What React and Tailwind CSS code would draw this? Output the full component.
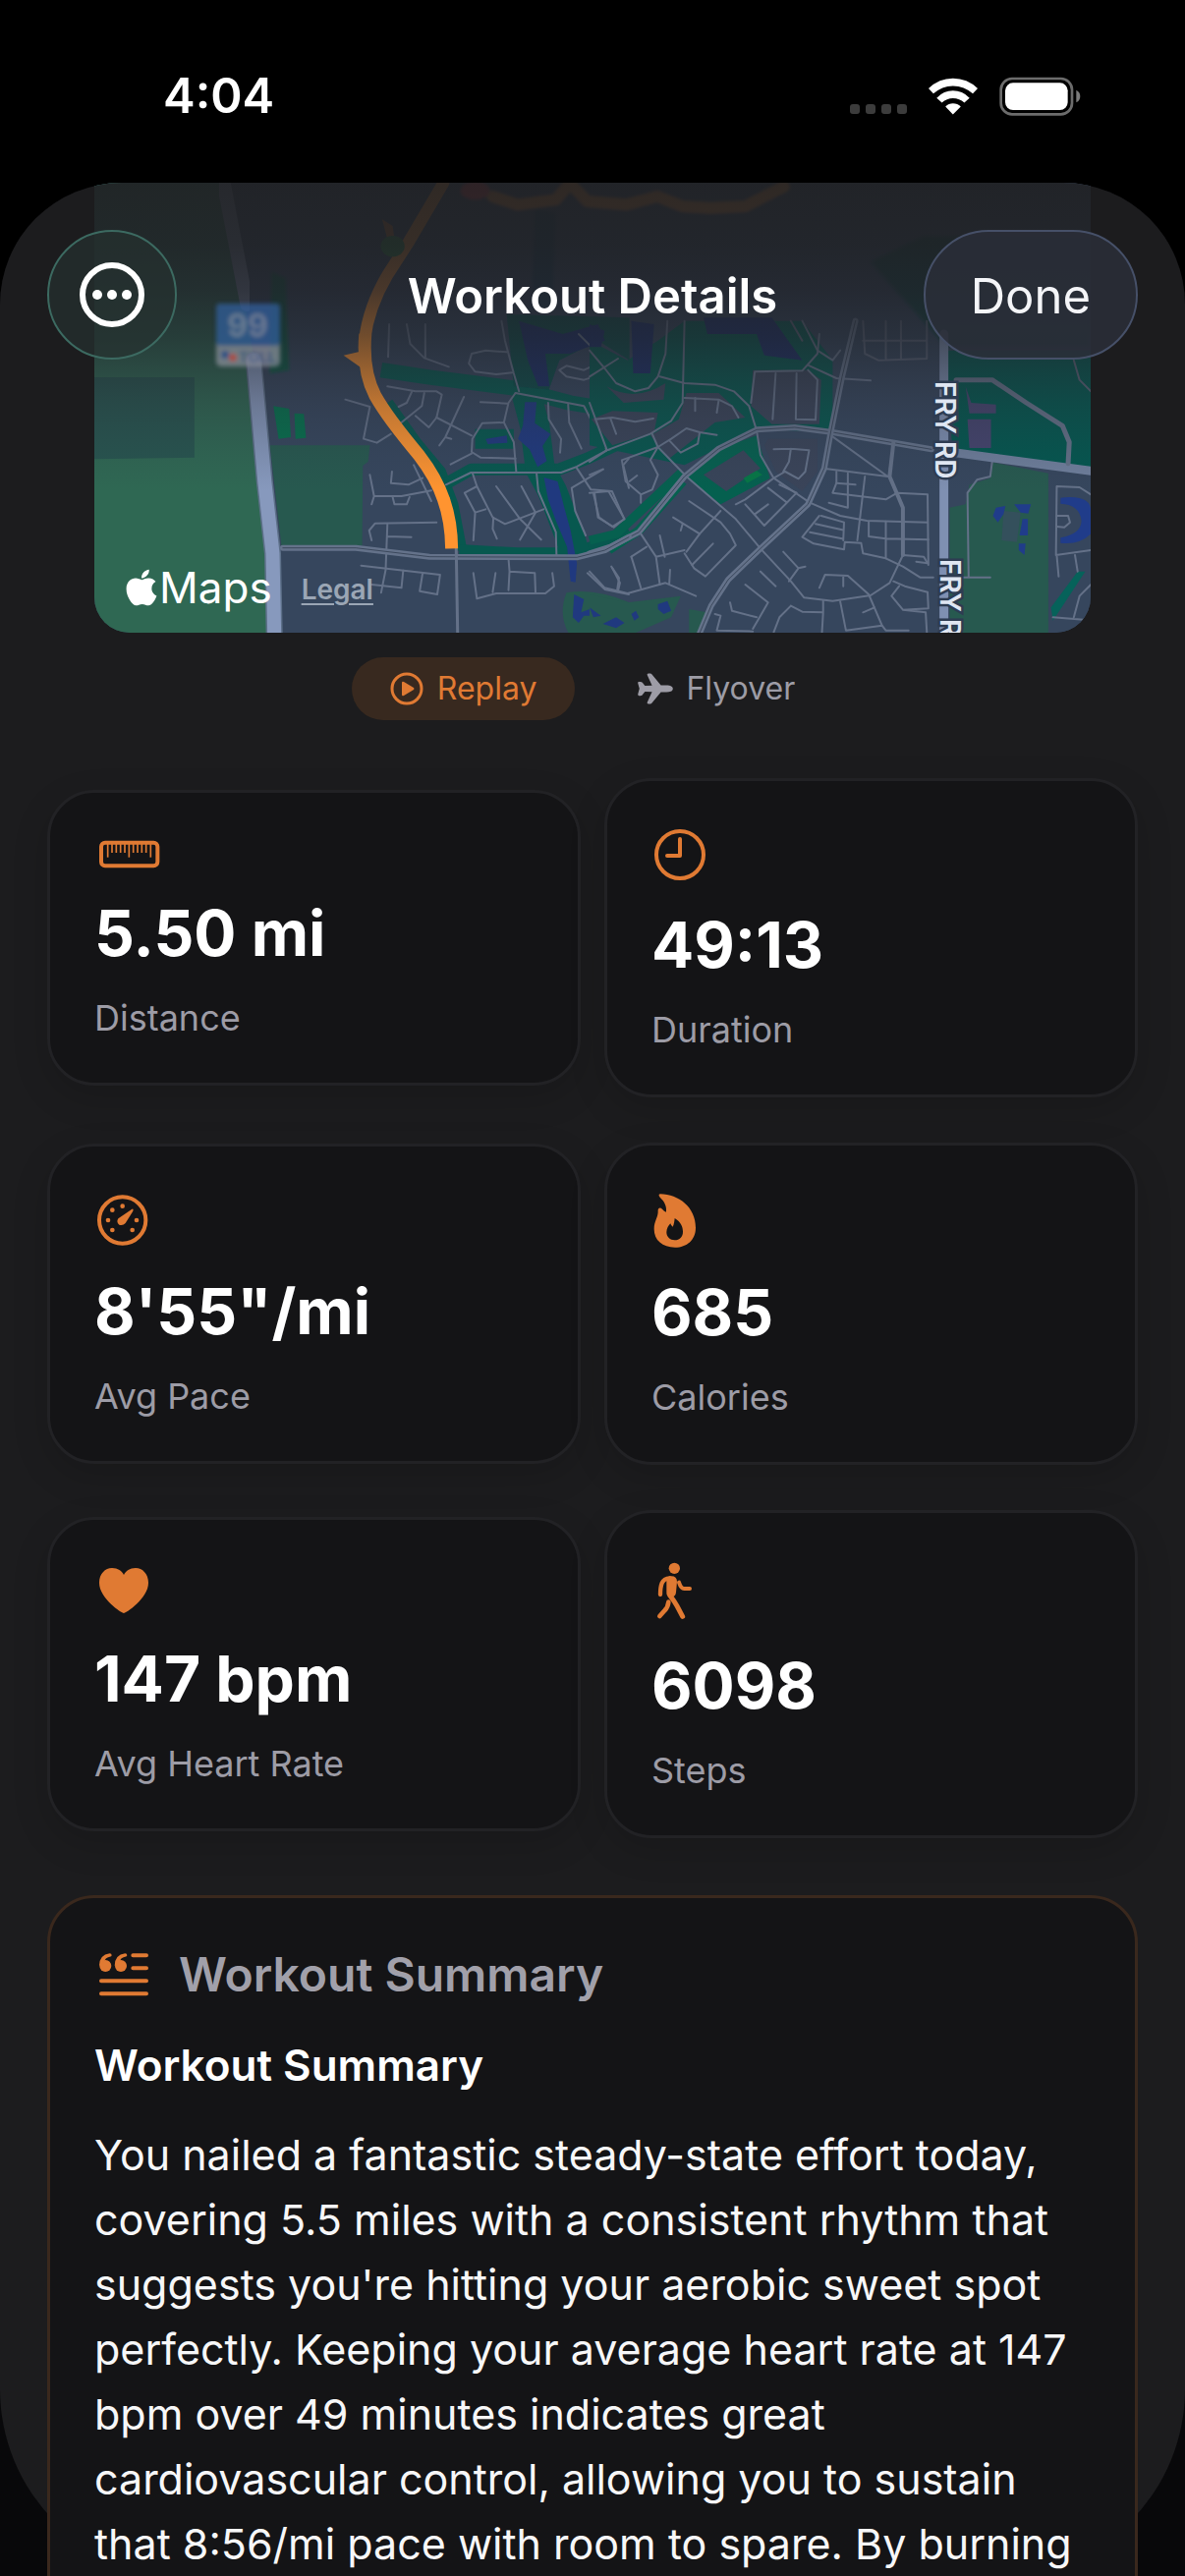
import React from "react";
import { IoAirplane } from "react-icons/io5";
import { FaApple } from "react-icons/fa";

const ORANGE = "#e07a33";

/* ---------- status bar ---------- */

function StatusBar() {
  return (
    <div className="flex h-[186px] shrink-0 items-center justify-between pt-[10px] pr-[106px] pb-[1px] pl-[166px]">
      <time className="text-[49px] leading-[60px] font-semibold text-white">4:04</time>
      <div className="flex items-center gap-[22px]">
        <svg width="58" height="38" viewBox="0 0 58 38" fill="#3c3c3c" role="img" aria-label="No signal">
          <rect x="0" y="27" width="10" height="10" rx="3" />
          <rect x="16" y="27" width="10" height="10" rx="3" />
          <rect x="32" y="27" width="10" height="10" rx="3" />
          <rect x="48" y="27" width="10" height="10" rx="3" />
        </svg>
        <svg width="50" height="38" viewBox="286 55 151 114" fill="#fff" role="img" aria-label="Wi-Fi">
          <path d="M286 88 Q318 57 361 57 Q405 57 437 88 L422 104 Q396 80 361 80 Q327 80 301 104Z" />
          <path d="M311 117 Q333 95 361 95 Q390 95 412 117 L396 132 Q381 118 361 118 Q342 118 327 132Z" />
          <path d="M338 144 Q348 134 361 134 Q375 134 385 144 L361 168Z" />
        </svg>
        <svg width="83" height="40" viewBox="503 52 249 120" role="img" aria-label="Battery full">
          <rect x="508" y="58" width="217" height="109" rx="34" fill="none" stroke="#6c6c6c" strokeWidth="8" />
          <rect x="521" y="71" width="191" height="83" rx="24" fill="#fff" />
          <path d="M738 93 Q750 99 750 112 Q750 125 738 131Z" fill="#7c7c7c" />
        </svg>
      </div>
    </div>
  );
}

/* ---------- map ---------- */

const WEST = "translate(80 180) scale(0.35714 0.33333)";
const EAST = "translate(600 180) scale(0.38655 0.33333)";

const westRoads = [
  "M880 640 L960 655 L1020 655 L1035 665 L1020 735",
  "M950 655 L935 690 L912 702",
  "M1020 735 L998 765 L960 730",
  "M985 660 L978 700 L920 750",
  "M1020 735 L1120 790",
  "M1098 672 L1045 795 L1028 820 M1045 795 L1062 800",
  "M1145 688 L1222 692",
  "M1245 660 L1225 690 L1212 750 L1150 752 L1122 800 L1120 840 L1145 857 L1245 860",
  "M1120 845 L1060 878",
  "M1212 750 L1240 810 L1247 900",
  "M1245 660 L1440 700 L1505 835",
  "M1338 690 L1340 740 L1375 800 L1372 842",
  "M1395 695 L1398 750 L1433 830",
  "M1470 740 L1500 735 L1568 740 M1512 740 L1530 785",
  "M1255 655 L1240 600 L1215 500 L1205 440",
  "M885 450 L882 550 M935 450 L945 510 L985 553 L1055 580 M988 450 L988 553",
  "M1235 598 L1190 603 L1130 595 L1112 570 L1120 540 L1160 530 L1220 535",
  "M1425 480 L1490 550 L1525 630 L1568 650",
  "M1535 555 L1500 600 L1440 620 L1390 610 L1370 590 L1390 577 L1440 590 L1500 560 L1530 555",
  "M760 680 L830 702 L812 800 L850 812 L890 785",
  "M1047 940 L1118 903 L1375 903 L1420 885 L1505 835 L1568 815",
  "M1122 903 L1135 945 L1100 965 L1130 1025 L1125 1110 M1130 1025 L1160 1015",
  "M1135 945 L1180 1040 L1215 1060 L1325 1015",
  "M1190 945 L1258 1045 L1318 1108",
  "M1262 945 L1302 1025 L1258 1108",
  "M1182 1040 L1180 1075 L1192 1105",
  "M1305 905 L1310 960 L1360 1085 L1362 1160",
  "M1420 890 L1460 955 L1520 960 L1555 1045 L1525 1070 L1480 1040 L1470 965",
  "M1495 893 L1405 950 L1415 1020 L1445 1095",
  "M1568 860 L1552 880 L1568 950",
  "M830 910 L842 975 L835 1000 M842 975 L920 975 L1005 958",
  "M893 900 L890 935 L940 940 L980 920 M895 978 L900 1000 L935 1000 L943 978",
  "M955 880 L1005 990",
  "M835 1110 L828 1080 L845 1058 L1020 1055",
  "M880 1060 L875 1200 L862 1270 M880 1098 L948 1100",
  "M805 1187 L1030 1215 L1022 1275 L972 1265 L980 1212",
  "M835 1245 L920 1255 L925 1202",
  "M1225 1165 L1228 1205 L1300 1210 L1302 1268 M1228 1205 L1225 1262",
  "M1125 1210 L1135 1288 L1190 1272 L1330 1272 L1355 1250 L1350 1210 M1188 1210 L1180 1268",
  "M1450 1210 L1500 1260 L1568 1275 M1518 1190 L1540 1225 L1535 1260",
];

const eastRoads = [
  "M0 690 L45 832 M15 740 L60 735 L120 748 L168 738 M55 738 L70 785",
  "M0 870 L45 835 L160 785 L215 745 L245 690 L250 440",
  "M205 440 L200 540 L180 610 L155 645 L120 655 L70 630 L40 585 L0 530",
  "M0 610 L75 555",
  "M185 610 L250 630 L330 635 L380 655 L420 700 L440 775",
  "M250 675 L340 680 L375 700 L392 735 M278 675 L278 715 M340 682 L335 720",
  "M425 690 L435 595 L560 592 L600 540 L605 480",
  "M490 600 L482 740 M545 600 L543 740 L595 742 L600 620 L575 590",
  "M560 440 L600 530 L640 560 L660 530",
  "M575 575 L650 615 L740 622",
  "M165 785 L180 825 L255 915 L385 1045 L450 1135 L530 1235 L565 1285 L640 1295 L740 1278 L790 1240 L825 1155",
  "M180 825 L85 865 L95 930 L135 970 L165 955 L180 910 L160 865 L180 825 M135 970 L135 995 M105 930 L125 912",
  "M180 825 L215 800 L255 768 L290 780 L285 815 L240 842 L210 805 M290 780 L335 788",
  "M440 775 L450 850 L485 920 L580 995 L660 1035 L730 1050 L890 1055",
  "M485 832 L530 830 L578 835 L568 900 L550 922 L515 900 L485 920 M530 830 L525 870 L510 900",
  "M485 920 L410 985 L385 1000 M470 950 L520 995 M545 965 L460 1065 L410 1000 M500 940 L545 965 M435 1030 L470 1000",
  "M630 785 L785 915 L615 890 M800 815 L788 915 L825 1010 L825 1155",
  "M650 900 L650 935 L640 965 L780 985 L810 965 L890 970 L892 1185",
  "M680 905 L680 1010 M650 935 L700 940 M725 915 L705 1110 M630 995 L680 1010",
  "M605 1035 L560 1100 L590 1120 L670 1138 L672 1115 L715 1118 L720 1150 L780 1165 L825 1190 L870 1223 L905 1223",
  "M610 1035 L670 1055 L668 1110 M595 1060 L665 1078 M580 1085 L665 1105",
  "M735 1052 L735 1098 L780 1105 L892 1108 M780 1052 L780 1165",
  "M825 1155 L880 1160 L890 1180 L860 1175",
  "M345 1020 L290 1090 L255 1145 M262 990 L345 1055 L370 1090 L385 1125 L305 1220 L275 1195 L250 1150",
  "M220 1040 L290 1090 M245 1060 L240 1080 M325 1120 L270 1185",
  "M135 1090 L175 1160 L250 1140 M185 1095 L198 1160 M110 1160 L150 1130 M175 1160 L185 1245",
  "M110 1160 L135 1255 M0 1205 L40 1255 L100 1272 L200 1240 L280 1280 M60 1195 L80 1240 L75 1265 M212 1200 L210 1240",
  "M0 965 L50 960 L92 1045 L60 1068 L25 1040 L10 965",
  "M0 910 L35 893",
  "M510 1145 L550 1195 L525 1235 M550 1195 L568 1190",
  "M450 1205 L490 1250 M410 1245 L470 1300 L450 1340 L430 1380 M370 1300 L375 1325 L440 1345",
  "M605 1255 L620 1215 L680 1218 L735 1275 L770 1370 M668 1218 L668 1250",
  "M530 1310 L500 1345 L485 1390 M530 1310 L560 1328 L615 1330 L612 1390 M615 1295 L615 1330",
  "M660 1297 L675 1385 L770 1370 L780 1385 L840 1385 M720 1330 L750 1315",
  "M800 1235 L830 1250 L890 1268 L892 1318 L825 1322 L795 1280 L815 1250 M825 1322 L885 1330 L888 1390",
  "M330 1335 L345 1340 L335 1385 L430 1388",
  "M1060 870 L1055 915 L1020 925 L995 965 L998 1220 M960 1223 L1055 1223",
  "M1320 970 L1290 948 L1230 945 L1228 1155 L1320 1140 M1230 1155 L1235 1220 M1278 1155 L1285 1205",
  "M1230 1035 L1260 1035 L1265 1055 L1250 1070 L1230 1068",
  "M1320 1245 L1290 1280 L1275 1345 M1220 1345 L1300 1352",
];

const blurredRoads = [
  "M720 440 L725 540 L760 560 L888 555 L888 440 M720 500 L888 500 M780 440 L780 555 M820 440 L820 555",
  "M530 440 L560 500 M1275 560 L1290 620 L1320 655",
];

function Road({ d, width = 2, color = "#647188" }) {
  return (
    <path d={d} fill="none" stroke={color} strokeWidth={width} strokeLinejoin="round" strokeLinecap="round" vectorEffect="non-scaling-stroke" />
  );
}

function DoubleRoad({ d }) {
  return (
    <>
      <Road d={d} width={6} color="#64728a" />
      <Road d={d} width={1} color="#3b485c" />
    </>
  );
}

function RouteMap() {
  return (
    <svg className="block w-full" viewBox="96 186 1014 458" preserveAspectRatio="xMidYMax slice" role="img" aria-label="Map of the workout route">
      <defs>
        <filter id="soft" x="-10%" y="-10%" width="120%" height="120%">
          <feGaussianBlur stdDeviation="2" />
        </filter>
        <filter id="softer" x="-10%" y="-30%" width="120%" height="160%">
          <feGaussianBlur stdDeviation="5" />
        </filter>
        <linearGradient id="fade" x1="0" y1="186" x2="0" y2="500" gradientUnits="userSpaceOnUse">
          <stop offset="0" stopColor="#202124" stopOpacity="0.93" />
          <stop offset="0.2" stopColor="#202226" stopOpacity="0.9" />
          <stop offset="0.35" stopColor="#212329" stopOpacity="0.82" />
          <stop offset="0.5" stopColor="#22252b" stopOpacity="0.64" />
          <stop offset="0.72" stopColor="#2a2d36" stopOpacity="0.3" />
          <stop offset="1" stopColor="#2f3a4a" stopOpacity="0" />
        </linearGradient>
      </defs>
      <rect x="96" y="186" width="1014" height="458" fill="#36465d" />

      {/* parks and greenways, west */}
      <g transform={WEST}>
        <path d="M40 0 H400 L475 390 L505 590 L520 900 L545 1400 H40Z" fill="#2f6853" />
        <path d="M40 612 H330 V857 L40 862Z" fill="#27554f" />
        <path d="M545 820 H830 L825 870 L810 882 L808 1125 H578Z" fill="#27594f" />
        <path d="M555 700 L600 708 L605 795 L570 800Z M615 722 L642 724 L648 797 L618 800Z" fill="#06704d" />
        <path d="M550 290 L590 310 L600 590 L545 600Z" fill="#0d5a45" filter="url(#softer)" />
        <g stroke="#07584f" fill="none" strokeLinejoin="round">
          <path d="M862 590 L1000 612 L1240 645 L1400 690 L1570 720" strokeWidth="46" />
          <path d="M880 690 L960 810 L1030 900 L1065 1000 L1090 1140" strokeWidth="34" />
          <path d="M1050 935 L1120 893 H1370 L1450 860 L1570 800" strokeWidth="36" />
          <path d="M1085 1138 L1250 1148 H1420 L1568 1080" strokeWidth="32" />
          <path d="M1275 660 L1300 760 L1315 890 L1350 960 L1400 1100 L1415 1150" strokeWidth="84" />
          <path d="M1130 800 L1240 800" strokeWidth="60" />
        </g>
        <path d="M1220 420 L1570 430 L1570 560 L1480 500 L1370 560 L1340 650 L1240 640Z" fill="#0a4c4a" filter="url(#soft)" />
        <path d="M1255 440 L1380 480 L1480 450 L1500 500 L1400 540 L1330 540 L1342 640 L1310 640 L1280 560Z" fill="#1c2f66" filter="url(#soft)" />
        <path d="M1300 100 L1360 110 L1350 400 L1290 400Z" fill="#123a52" filter="url(#softer)" />
        <g fill="#20397f">
          <path d="M1272 688 H1305 L1300 752 L1345 785 L1322 822 L1334 868 L1308 886 L1285 832 L1252 800 L1266 760Z" />
          <path d="M1160 800 L1220 790 L1222 812 L1166 816Z" />
          <path d="M1326 918 L1365 930 L1384 1010 L1402 1080 L1420 1180 L1416 1238 L1402 1235 L1392 1130 L1360 1050 L1338 985Z" />
        </g>
        <path d="M1390 1270 Q1470 1255 1570 1300 V1400 H1400 Q1365 1340 1390 1270Z" fill="#27594f" />
        <path d="M1412 1275 L1440 1290 L1432 1330 L1470 1315 L1490 1340 L1440 1340 L1425 1362 L1408 1345Z M1490 1362 L1530 1345 L1556 1365 L1530 1378Z" fill="#20397f" />
        {westRoads.map((d) => <Road key={d} d={d} />)}
      </g>

      {/* greenways, parks and lakes, east */}
      <g transform={EAST}>
        <path d="M250 440 L560 440 L640 560 L640 780 L440 770 L250 880 L0 820 V500 L100 560 L180 500Z" fill="#07574f" />
        <path d="M110 440 L170 450 L160 600 L115 600Z M300 430 L480 430 L560 560 L460 545 L440 480 L310 480Z M0 450 L40 470 L30 520 L0 520Z" fill="#1c2f66" filter="url(#soft)" />
        <path d="M740 260 L880 180 L1320 190 V520 H940Z" fill="#0c4240" filter="url(#softer)" />
        <path d="M940 530 H1320 V890 L1060 855 L955 835Z" fill="#03574f" />
        <path d="M45 640 Q120 690 200 630 L195 680 L90 690Z M5 740 L60 715 L180 720 L170 780 L60 820Z M430 590 H575 L610 620 L605 755 H480 L425 700Z M255 660 L340 660 L410 735 L330 750 L210 860 L160 790 L235 740Z M470 800 H600 V900 L560 960 L490 900 L460 820Z" fill="#3a4459" />
        <path d="M250 915 L340 830 L440 790 L475 920 L345 1000Z" fill="#05604f" />
        <path d="M300 910 L405 835 L450 890 L360 960Z" fill="#384459" />
        <path d="M405 920 L440 897 L455 910 L415 935Z" fill="#067646" />
        <path d="M0 1110 L70 1090 L245 900 M50 1140 L130 1080 L245 930" stroke="#06604f" strokeWidth="26" fill="none" />
        <path d="M0 1275 L100 1300 L240 1280 L215 1345 L120 1393 H0Z M262 1320 L310 1330 L290 1400 H262Z" fill="#27594f" />
        <path d="M0 1315 L30 1340 L10 1345Z M35 1365 L70 1345 L92 1362 L70 1378Z M110 1335 L122 1325 L130 1345 L118 1355Z M180 1305 L205 1295 L215 1325 L195 1335 L180 1320Z" fill="#20397f" />
        <path d="M990 640 L1005 690 L1070 695 V722 H1000Z M995 740 H1057 V828 H1000Z" fill="#45446e" />
        <path d="M1062 872 L1208 905 V1393 H948 V1010 L990 1000 L1000 940 L1055 920Z" fill="#27594f" />
        <path d="M1208 905 L1320 915 V1393 H1210Z" fill="#36465d" />
        <path d="M1285 1205 L1305 1205 L1220 1355 L1215 1315Z" fill="#06625a" />
        <path d="M1090 1020 L1135 1025 L1125 1115 L1085 1110Z" fill="#34505c" />
        <path d="M1070 1010 L1095 1005 L1090 1030 L1075 1055 L1062 1035Z M1118 1000 L1162 1000 L1155 1028 L1135 1025Z M1140 1045 L1154 1045 L1154 1095 L1132 1095Z M1130 1120 L1148 1120 L1145 1155 L1130 1140Z M1240 980 Q1320 970 1320 1020 V1090 Q1290 1125 1240 1118 V1102 Q1295 1090 1295 1050 Q1290 1000 1240 998Z" fill="#203c8a" />
        {eastRoads.map((d) => <Road key={d} d={d} />)}
        <g filter="url(#soft)">
          {blurredRoads.map((d) => <Road key={d} d={d} color="#5a6478" />)}
        </g>
        <DoubleRoad d="M0 1150 L55 1130 L130 1085 L250 915 L340 830 L440 772 L540 765 L640 780 L900 832" />
        <DoubleRoad d="M700 440 L665 610 L635 780 L618 890 L575 1000 L450 1135 L365 1230 L320 1310 L290 1393" />
        <Road d="M960 842 L1320 898" width={9} color="#6f7f9c" />
        <Road d="M800 812 L790 915 L825 1010 V1155" width={4} />
        <Road d="M965 620 H1060 L1150 690 L1245 760 L1263 810 L1260 875" width={5} />
        <Road d="M933 480 V1393" width={9} color="#7f90b2" />
      </g>

      <g transform={WEST}>
        <DoubleRoad d="M582 1133 L790 1133 L1000 1160 L1420 1162 L1500 1140 L1568 1100" />
        <Road d="M1076 1135 L1080 1393" width={3} />
        <g filter="url(#soft)">
          <Road d="M410 0 L480 390" width={14} color="#7d89a3" />
        </g>
        <Road d="M499 560 L530 930 L553 1150 L558 1410" width={17} color="#5d7089" />
        <Road d="M499 560 L530 930 L553 1150 L558 1410" width={14} color="#8799bd" />
      </g>

      {/* route */}
      <g transform={WEST}>
        <g filter="url(#softer)">
          <Road d="M1180 60 L1250 85 L1360 70 L1400 20 L1450 75 L1560 85 L1650 60 L1720 90 L1800 95 L1900 90 L2010 30" width={12} color="#f08a30" />
          <ellipse cx="1130" cy="42" rx="42" ry="28" fill="#e83a44" />
        </g>
        <g filter="url(#soft)">
          <Road d="M1040 18 L940 200 L880 300 Q825 400 815 500" width={12} color="#ff9430" />
          <path d="M755 545 L815 530 L815 590Z" fill="#ff9430" />
          <path d="M865 130 L895 150 L900 190 L880 190Z" fill="#c06a2c" />
          <ellipse cx="895" cy="212" rx="34" ry="32" fill="#2f8a42" />
        </g>
        <path d="M817 480 Q808 590 845 668 Q880 735 970 850 Q1020 920 1040 985 Q1062 1050 1063 1135" fill="none" stroke="#ff9430" strokeWidth="13" vectorEffect="non-scaling-stroke" />
      </g>

      <rect x="96" y="186" width="1014" height="314" fill="url(#fade)" />

      {/* highway shield */}
      <g filter="url(#soft)" opacity="0.72">
        <rect x="220" y="309" width="65" height="64" rx="5" fill="#8c919c" />
        <rect x="220" y="309" width="65" height="43" rx="4" fill="#30609f" />
        <text x="252" y="343" textAnchor="middle" fontSize="32" fontWeight="700" fill="#7f93b3">99</text>
        <text x="262" y="369" textAnchor="middle" fontSize="15" fontWeight="700" fill="#3c5a92">TOLL</text>
        <circle cx="229" cy="361" r="4" fill="#2d56a0" />
        <circle cx="237" cy="364" r="4" fill="#d94f45" />
      </g>

      <g fill="#dfe6f2" stroke="#2e3c52" strokeWidth="5" paintOrder="stroke" fontSize="28" fontWeight="600">
        <text transform="translate(952 388) rotate(90)">FRY RD</text>
        <text transform="translate(957 569) rotate(90)">FRY R</text>
      </g>
    </svg>
  );
}

function MapCard() {
  return (
    <div className="relative mx-[96px] overflow-hidden rounded-b-[36px]">
      <RouteMap />
      <div className="absolute bottom-[18px] left-[32px] flex items-center gap-[30px]">
        <span className="flex items-center gap-[2px] text-[44px] leading-[56px] text-white">
          <FaApple className="h-[42px] w-[32px]" aria-hidden="true" />
          Maps
        </span>
        <a href="#legal" className="mt-[4px] text-[28px] leading-[36px] font-semibold text-[#9ba6b5] underline decoration-2 underline-offset-4">
          Legal
        </a>
      </div>
    </div>
  );
}

/* ---------- sheet header ---------- */

function SheetHeader() {
  return (
    <header className="absolute inset-x-0 top-0 grid grid-cols-[1fr_auto_1fr] items-center px-[48px] pt-[48px]">
      <button type="button" aria-label="More options" className="flex size-[132px] items-center justify-center rounded-full border-2 border-[#3c6a61] bg-[#25312f]/70">
        <svg width="66" height="66" viewBox="0 0 66 66" fill="#fff" aria-hidden="true">
          <circle cx="33" cy="33" r="30" fill="none" stroke="#fff" strokeWidth="6" />
          <circle cx="18" cy="33" r="5" />
          <circle cx="33" cy="33" r="5" />
          <circle cx="48" cy="33" r="5" />
        </svg>
      </button>
      <h1 className="pt-[4px] text-[49px] leading-[60px] font-semibold text-white">Workout Details</h1>
      <button type="button" className="h-[132px] justify-self-end rounded-full border-2 border-[#465068] bg-[#2a2e38]/85 px-[46px] pt-[4px] text-[49px] leading-[60px] text-[#f4f5f8]">
        Done
      </button>
    </header>
  );
}

/* ---------- playback buttons ---------- */

function PlaybackButtons() {
  return (
    <div className="mt-[25px] flex justify-center gap-[24px]">
      <button type="button" className="flex h-[64px] items-center gap-[14px] rounded-full bg-[#38291f] px-[39px] text-[32px] text-[#e07a33]">
        <svg width="34" height="34" viewBox="0 0 34 34" fill={ORANGE} aria-hidden="true">
          <circle cx="17" cy="17" r="15" fill="none" stroke={ORANGE} strokeWidth="3" />
          <path d="M12 11 Q12 9 14 10 L24 16 Q25 17 24 18 L14 24 Q12 25 12 23Z" />
        </svg>
        Replay
      </button>
      <button type="button" className="flex h-[64px] items-center gap-[12px] rounded-full px-[39px] text-[32px] text-[#9d9ca6]">
        <IoAirplane className="size-[38px]" aria-hidden="true" />
        Flyover
      </button>
    </div>
  );
}

/* ---------- stat icons ---------- */

function RulerIcon() {
  const marks = [[62, 98], [75, 84], [88, 84], [101, 84], [114, 84], [127, 98], [140, 84], [153, 84], [166, 84], [179, 84], [193, 98]];
  return (
    <svg width="72" height="33" viewBox="21 39 216 99" fill="none" stroke={ORANGE} aria-hidden="true">
      <rect x="42" y="53" width="172" height="71" rx="12" strokeWidth="12" />
      {marks.map(([x, y]) => <path key={x} d={`M${x} 56V${y}`} strokeWidth="5" />)}
    </svg>
  );
}

function ClockIcon() {
  return (
    <svg width="57" height="57" viewBox="0 0 57 57" fill="none" stroke={ORANGE} strokeWidth="4" strokeLinecap="round" strokeLinejoin="round" aria-hidden="true">
      <circle cx="29" cy="29" r="24" />
      <path d="M29 13V30H16" />
    </svg>
  );
}

function GaugeIcon() {
  const dots = [[107, 1165], [76, 1177], [63, 1208], [76, 1238], [137, 1238], [150, 1208]];
  return (
    <svg width="58" height="58" viewBox="21 1121 174 174" fill={ORANGE} aria-hidden="true">
      <circle cx="107" cy="1208" r="71" fill="none" stroke={ORANGE} strokeWidth="12" />
      {dots.map(([x, y]) => <circle key={`${x}-${y}`} cx={x} cy={y} r="7" />)}
      <path d="M136 1174 Q142 1172 139 1180 L116 1217 Q108 1226 97 1222 Q87 1214 94 1203Z" />
    </svg>
  );
}

function FlameIcon() {
  return (
    <svg width="50" height="60" viewBox="72 65 150 180" fill={ORANGE} fillRule="evenodd" aria-hidden="true">
      <path d="M99 75 C155 76 207 115 207 178 C207 215 180 238 144 238 C106 238 80 216 80 182 C80 156 93 148 92 125 C92 117 99 115 105 121 C109 126 113 128 117 130 C119 112 112 98 98 85 C93 80 94 75 99 75Z M143 149 C162 160 168 176 168 190 C168 206 158 216 143 216 C129 216 118 206 118 192 C118 180 124 171 130 165 C132 170 134 173 137 175 C141 168 142 158 143 149Z" />
    </svg>
  );
}

function HeartIcon() {
  return (
    <svg width="58" height="52" viewBox="0 0 58 52" fill={ORANGE} aria-hidden="true">
      <path d="M30 49 C28 49 5 34 5 18 C5 9 11 3 18 3 C24 3 28 6 30 10 C32 6 36 3 42 3 C49 3 55 9 55 18 C55 34 32 49 30 49Z" />
    </svg>
  );
}

function WalkIcon() {
  return (
    <svg width="50" height="66" viewBox="72 1184 150 198" fill="none" stroke={ORANGE} strokeLinecap="round" strokeLinejoin="round" aria-hidden="true">
      <circle cx="142" cy="1215" r="17" fill={ORANGE} stroke="none" />
      <path d="M127 1239 Q150 1236 150 1256 L147 1288 Q146 1302 132 1302 Q117 1302 118 1288 L118 1244Z" fill={ORANGE} stroke="none" />
      <path d="M128 1245 Q110 1246 104 1260 Q99 1272 99 1295" strokeWidth="13" />
      <path d="M156 1258 Q162 1277 172 1277 H189" strokeWidth="12" />
      <path d="M128 1297 Q142 1315 150 1330 L167 1362" strokeWidth="15" />
      <path d="M124 1318 Q122 1334 113 1343 L97 1361" strokeWidth="14" />
    </svg>
  );
}

function QuoteIcon() {
  return (
    <svg width="56" height="54" viewBox="51 68 168 162" fill="none" stroke={ORANGE} strokeWidth="12" strokeLinecap="round" aria-hidden="true">
      <path d="M169 90H210M169 129H210M72 168H210M72 207H210" />
      <g fill={ORANGE} stroke="none">
        <circle cx="85" cy="122" r="18" />
        <path d="M66 122 Q66 88 98 84 Q104 84 104 90 Q104 94 98 94 Q83 98 82 108Z" />
        <circle cx="132" cy="122" r="18" />
        <path d="M113 122 Q113 88 145 84 Q151 84 151 90 Q151 94 145 94 Q130 98 129 108Z" />
      </g>
    </svg>
  );
}

/* ---------- stats ---------- */

const stats = [
  { label: "Distance", value: "5.50 mi", Icon: RulerIcon },
  { label: "Duration", value: "49:13", Icon: ClockIcon },
  { label: "Avg Pace", value: "8'55\"/mi", Icon: GaugeIcon },
  { label: "Calories", value: "685", Icon: FlameIcon },
  { label: "Avg Heart Rate", value: "147 bpm", Icon: HeartIcon },
  { label: "Steps", value: "6098", Icon: WalkIcon },
];

function StatCard({ label, value, Icon }) {
  return (
    <div className="flex flex-col gap-[24px] rounded-[48px] border-3 border-[#222225] bg-[#141416] px-[45px] pt-[46px] pb-[44px] shadow-[0_12px_36px_rgba(0,0,0,0.15)]">
      <Icon />
      <dd className="text-[64px] leading-[80px] font-bold text-white">{value}</dd>
      <dt className="text-[36px] leading-[44px] text-[#9d9ca6]">{label}</dt>
    </div>
  );
}

function Stats() {
  return (
    <dl className="mt-[59px] grid grid-cols-2 items-center gap-x-[24px] gap-y-[46px] px-[48px]">
      {stats.map((stat) => <StatCard key={stat.label} {...stat} />)}
    </dl>
  );
}

/* ---------- summary ---------- */

function Summary() {
  return (
    <section className="mx-[48px] mt-[58px] rounded-[48px] border-3 border-[#3a281d] bg-[#141416] px-[45px] pt-[46px] pb-[96px]">
      <h2 className="flex items-center gap-[30px] text-[48px] leading-[64px] font-semibold text-[#a1a0aa]">
        <QuoteIcon />
        Workout Summary
      </h2>
      <h3 className="mt-[32px] text-[44px] leading-[56px] font-semibold text-white">Workout Summary</h3>
      <p className="mt-[30px] text-[43px] leading-[66px] text-[#f7f7f8]">
        You nailed a fantastic steady-state effort today,
        <br />
        covering 5.5 miles with a consistent rhythm that
        <br />
        suggests you're hitting your aerobic sweet spot
        <br />
        perfectly. Keeping your average heart rate at 147
        <br />
        bpm over 49 minutes indicates great
        <br />
        cardiovascular control, allowing you to sustain
        <br />
        that 8:56/mi pace with room to spare. By burning
      </p>
    </section>
  );
}

export default function App() {
  return (
    <div className="flex h-screen flex-col overflow-hidden bg-black font-['Inter',sans-serif]">
      <StatusBar />
      <main className="relative isolate min-h-0 flex-1 overflow-hidden rounded-t-[124px] bg-[#08080a]">
        <div className="absolute inset-0 -z-10 rounded-b-[190px] bg-[#1c1c1e]" />
        <MapCard />
        <SheetHeader />
        <PlaybackButtons />
        <Stats />
        <Summary />
      </main>
    </div>
  );
}
